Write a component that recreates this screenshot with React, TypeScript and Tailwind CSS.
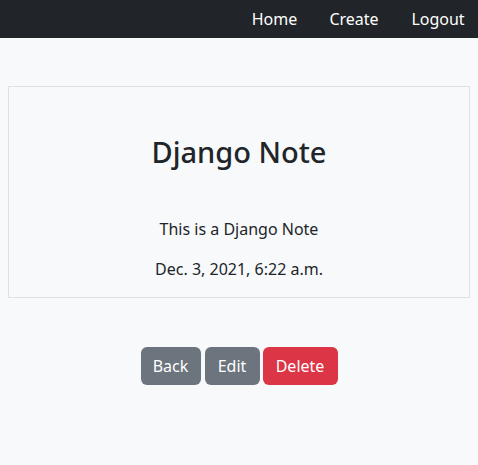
export default function App() {
  return (
    <div
      className="min-h-[465px] bg-[#f8f9fa] text-[#212529]"
      style={{ fontFamily: '"Noto Sans", "Open Sans", sans-serif' }}
    >
      <nav className="flex h-[38px] items-center justify-end bg-[#212529] text-[16px] text-white">
        <ul className="flex items-center text-center">
          <li className="w-[71px]">Home</li>
          <li className="w-[88px]">Create</li>
          <li className="w-[80px]">Logout</li>
        </ul>
      </nav>

      <main className="px-[8px] pt-[48px]">
        <div className="border border-[#dee2e6] pt-[47px] pb-[16px] text-center">
          <h1 className="text-[29px] leading-[35px] font-medium">Django Note</h1>
          <p className="mt-[48px] text-[16px] leading-[24px]">This is a Django Note</p>
          <p className="mt-[16px] text-[16px] leading-[24px]">Dec. 3, 2021, 6:22 a.m.</p>
        </div>

        <div className="mt-[49px] flex justify-center">
          <button className="h-[38px] w-[60px] rounded-[6px] bg-[#6c757d] text-[16px] text-white">Back</button>
          <button className="ml-[4px] h-[38px] w-[55px] rounded-[6px] bg-[#6c757d] text-[16px] text-white">Edit</button>
          <button className="ml-[3px] h-[38px] w-[75px] rounded-[6px] bg-[#dc3545] text-[16px] text-white">Delete</button>
        </div>
      </main>
    </div>
  );
}
